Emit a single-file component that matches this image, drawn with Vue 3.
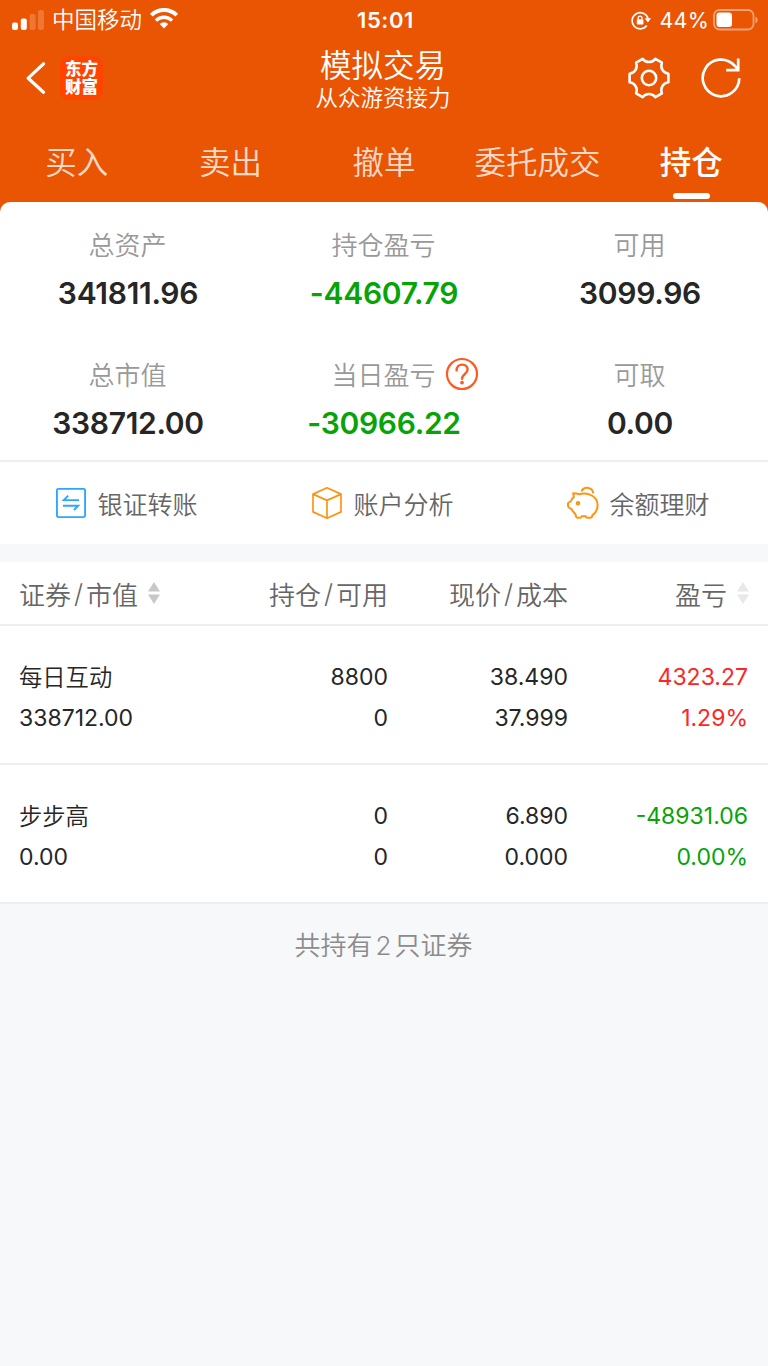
<template>
  <div class="page">
    <header class="header">
      <!-- Status bar -->
      <div class="status">
        <div class="status-left">
          <svg class="signal" width="32" height="20" viewBox="0 0 32 20" fill="#fff">
            <rect x="0" y="12.5" width="6" height="7.5" rx="2" />
            <rect x="8.8" y="8.5" width="6" height="11.5" rx="2" />
            <rect x="17.6" y="4" width="6" height="16" rx="2" opacity="0.2" />
            <rect x="26" y="0" width="6" height="20" rx="2" opacity="0.2" />
          </svg>
          <span class="carrier">中国移动</span>
          <svg class="wifi" width="28" height="21" viewBox="0 0 28 21" fill="none" stroke="#fff" stroke-width="4">
            <path d="M1.3 7.2a18 18 0 0 1 25.4 0" />
            <path d="M5.9 12.6a11.5 11.5 0 0 1 16.2 0" stroke-width="3.4" />
            <path d="M14 20.5l-4.3-4.4a6.2 6.2 0 0 1 8.6 0z" fill="#fff" stroke="none" />
          </svg>
        </div>
        <span class="clock">15:01</span>
        <div class="status-right">
          <svg width="20" height="19" viewBox="0 0 20 19" fill="none" stroke="#fff" stroke-width="1.7">
            <path d="M17 7.4a8.1 8.1 0 1 0-1.2 7.2" />
            <path d="M13.6 7.2H20l-3.100 4.300z" fill="#fff" stroke="none" />
            <rect x="5.8" y="8.2" width="6.6" height="5.4" rx="0.8" fill="#fff" stroke="none" />
            <path d="M7.2 8.6V7a1.9 1.9 0 0 1 3.8 0v1.6" stroke-width="1.3" />
          </svg>
          <span class="percent">44%</span>
          <svg width="46" height="22" viewBox="0 0 46 22">
            <rect x="1" y="1" width="39.5" height="19.5" rx="5.5" fill="none" stroke="#fff" stroke-width="1.8" opacity="0.45" />
            <rect x="3.5" y="3.5" width="15.5" height="14.5" rx="3" fill="#fff" />
            <path d="M42.5 7.5a4 4 0 0 1 0 7z" fill="#fff" opacity="0.5" />
          </svg>
        </div>
      </div>

      <!-- Title bar -->
      <div class="nav">
        <div class="nav-left">
          <svg width="20" height="34" viewBox="0 0 20 34" fill="none" stroke="#fff" stroke-width="3.2" stroke-linecap="round" stroke-linejoin="round">
            <path d="M17.5 2.8L2.2 17.2l15.3 14" />
          </svg>
          <div class="logo"><span>东方</span><span>财富</span></div>
        </div>
        <div class="nav-title">
          <h1>模拟交易</h1>
          <p>从众游资接力</p>
        </div>
        <div class="nav-right">
          <svg width="42" height="42" viewBox="0 0 42 42" fill="none" stroke="#fff" stroke-width="2.6" stroke-linejoin="round">
            <path d="M14.6 1.9C16.2 4 18.3 5 21 5s4.8-1 6.4-3.1l6.5 3.7c-1 2.6-.8 4.9.5 7.2 1.300 2.200 3.300 3.500 6 3.900v8.600c-2.700.4-4.700 1.700-6 3.900-1.300 2.300-1.500 4.600-.5 7.200l-6.500 3.700C25.800 38 23.700 37 21 37s-4.800 1-6.400 3.100l-6.500-3.700c1-2.600.8-4.900-.5-7.200-1.300-2.200-3.300-3.500-6-3.900v-8.600c2.700-.4 4.700-1.700 6-3.900 1.300-2.300 1.500-4.600.5-7.200z" />
            <circle cx="21" cy="21" r="7.2" />
          </svg>
          <svg width="42" height="42" viewBox="0 0 42 42" fill="none" stroke="#fff" stroke-width="2.7">
            <path d="M39.3 21.3A18.300 18.300 0 1 1 34.6 8.7l3.400 3.700" />
            <path d="M38.2 1.6v11.600H26.2" />
          </svg>
        </div>
      </div>

      <nav class="tabs">
        <span v-for="tab in tabs" :key="tab" class="tab" :class="{ active: tab === current }">{{ tab }}</span>
      </nav>
    </header>

    <!-- Account summary -->
    <div class="summary-wrap">
      <section class="summary">
        <div v-for="s in stats" :key="s.label" class="stat">
          <div class="stat-label">
            {{ s.label }}
            <svg v-if="s.help" class="help" width="34" height="34" viewBox="0 0 34 34" fill="none" stroke="#ff5a1f" stroke-width="2.2">
              <circle cx="17" cy="17" r="15" />
              <path d="M11.6 13.4c0-3.800 2.400-5.800 5.500-5.800 3.200 0 5.500 2 5.500 5 0 4.300-5.600 4.600-5.600 9.200" stroke-width="2.4" stroke-linecap="round" />
              <circle cx="17" cy="25.6" r="1.9" fill="#ff5a1f" stroke="none" />
            </svg>
          </div>
          <div class="stat-value" :class="s.tone">{{ s.value }}</div>
        </div>
      </section>
    </div>

    <section class="actions">
      <div class="action">
        <svg width="32" height="34" viewBox="0 0 32 34" fill="none" stroke="#2ea5ff" stroke-width="1.9">
          <rect x="1.9" y="2.9" width="28.2" height="28.2" rx="1.5" />
          <path d="M24 14.100H8.800l4.400-4.400M8 19.700h15.200l-4.200 4.300" />
        </svg>
        <span>银证转账</span>
      </div>
      <div class="action">
        <svg width="32" height="34" viewBox="0 0 32 34" fill="none" stroke="#ff9412" stroke-width="1.7" stroke-linejoin="round">
          <path d="M16 1.8l14 6.300v17.800l-14 6.300-14-6.300V8.100zM2 8.100l14 6.300 14-6.300M16 14.400v17.800" />
        </svg>
        <span>账户分析</span>
      </div>
      <div class="action">
        <svg width="32" height="34" viewBox="0 0 32 34" fill="none" stroke="#ff9412" stroke-width="2" stroke-linecap="round" stroke-linejoin="round">
          <path d="M6.200 7.300c2.600.2 4.300.5 6 .9 3.300-.8 7.500-.8 10.600.4 4.800 1.800 7.800 5.500 7.800 10.300 0 4.600-2.300 8.300-5.300 10.500-.2 1.600-.8 2.400-2 2.400h-2.800c-1 0-1.500-.6-1.700-1.600-1.400.2-2.800.2-4.100 0-.3 1-.8 1.600-1.800 1.600h-1.900c-1.400 0-2-.7-2.100-2.100-.1-2.300-2.400-3.200-3.700-5.500-.4-.8-.8-1.100-1.500-1.500L1.900 21.500c-.6-.5-.9-1.200-.9-2v-1.800c0-.8.4-1.300 1.200-1.600l1.600-.7c.4-1.900 1.500-3.200 3-4.300z" />
          <path d="M14.800 4.600c3-4.400 10.600-3.500 11.300 2" />
          <circle cx="11" cy="17.300" r="1.300" fill="#ff9412" />
        </svg>
        <span>余额理财</span>
      </div>
    </section>

    <!-- Holdings -->
    <section class="holdings">
      <div class="row head">
        <div class="cell-head">证券<i>/</i>市值
          <svg class="sort" width="12" height="22" viewBox="0 0 12 22" fill="#c8c8c8"><path d="M6 0l6 9.5H0zM6 22l6-9.500H0z" /></svg>
        </div>
        <div class="cell-head">持仓<i>/</i>可用</div>
        <div class="cell-head">现价<i>/</i>成本</div>
        <div class="cell-head">盈亏
          <svg class="sort" width="12" height="22" viewBox="0 0 12 22" fill="#e8e8e8"><path d="M6 0l6 9.500H0zM6 22l6-9.500H0z" /></svg>
        </div>
      </div>
      <div v-for="h in holdings" :key="h.name" class="row item">
        <div><p class="name">{{ h.name }}</p><p>{{ h.marketValue }}</p></div>
        <div><p>{{ h.amount }}</p><p>{{ h.available }}</p></div>
        <div><p>{{ h.price }}</p><p>{{ h.cost }}</p></div>
        <div :class="h.tone"><p>{{ h.profit }}</p><p>{{ h.rate }}</p></div>
      </div>
    </section>

    <p class="total">共持有<b>{{ holdings.length }}</b>只证券</p>
  </div>
</template>

<script setup>
import { ref } from 'vue'

const tabs = ['买入', '卖出', '撤单', '委托成交', '持仓']
const current = ref('持仓')

const stats = [
  { label: '总资产', value: '341811.96' },
  { label: '持仓盈亏', value: '-44607.79', tone: 'down' },
  { label: '可用', value: '3099.96' },
  { label: '总市值', value: '338712.00' },
  { label: '当日盈亏', value: '-30966.22', tone: 'down', help: true },
  { label: '可取', value: '0.00' },
]

const holdings = [
  {
    name: '每日互动', marketValue: '338712.00', amount: '8800', available: '0',
    price: '38.490', cost: '37.999', profit: '4323.27', rate: '1.29%', tone: 'up',
  },
  {
    name: '步步高', marketValue: '0.00', amount: '0', available: '0',
    price: '6.890', cost: '0.000', profit: '-48931.06', rate: '0.00%', tone: 'down',
  },
]
</script>

<style>
body { background: #f7f8fa; }
</style>

<style scoped>
.page {
  --c-brand: #ea5504;
  --c-line: #eeeeee;
  --c-ink: #262626;
  --w-text: 350;

  min-height: 1366px;
  background: #f7f8fa;
  color: var(--c-ink);
  font-family: Inter, 'Noto Sans CJK SC', sans-serif;
  font-weight: var(--w-text);
}

p, h1 { margin: 0; }
svg { display: block; flex: none; }

/* ── HEADER ── */
.header {
  height: 202px;
  background: var(--c-brand);
  color: #fff;
}

.status {
  display: grid;
  grid-template-columns: 1fr auto 1fr;
  align-items: center;
  height: 40px;
  padding: 0 9px 0 12px;
}

.status-left, .status-right { display: flex; align-items: center; }
.status-right { justify-content: flex-end; }
.carrier { margin-left: 8px; font-size: 22.5px; line-height: 40px; }
.wifi { margin: 0 0 3px 8px; }
.clock { font-size: 22px; font-weight: 600; letter-spacing: 0.6px; }
.percent { margin: 0 4px 0 9px; font-size: 21.5px; font-weight: 400; letter-spacing: 0.2px; }

.nav {
  display: grid;
  grid-template-columns: 1fr auto 1fr;
  height: 80px;
  padding: 0 26px;
}

.nav-left { display: flex; align-items: center; gap: 14px; padding-bottom: 4px; }

.logo {
  display: flex;
  flex-direction: column;
  align-items: center;
  justify-content: center;
  width: 43px;
  height: 44px;
  border-radius: 9px;
  background: #ff4400;
  font-size: 16.5px;
  font-weight: 900;
  line-height: 18px;
}

.nav-title { margin-left: -2px; text-align: center; }
.nav-title h1 { padding-top: 8px; font-size: 31.5px; font-weight: var(--w-text); line-height: 36px; }
.nav-title p { font-size: 22.5px; line-height: 27px; }
.nav-right { display: flex; align-items: center; justify-content: flex-end; gap: 30px; padding-bottom: 4px; }

.tabs { display: grid; grid-template-columns: repeat(5, 1fr); }

.tab {
  display: flex;
  flex-direction: column;
  align-items: center;
  height: 82px;
  font-size: 31.5px;
  line-height: 85px;
  color: rgba(255, 255, 255, 0.8);
}

.tab.active { color: #fff; font-weight: 500; }

.tab.active::after {
  content: '';
  width: 37px;
  height: 6px;
  margin-top: -12px;
  border-radius: 3px;
  background: #fff;
}

/* ── SUMMARY ── */
.summary-wrap { background: var(--c-brand); }

.summary {
  display: grid;
  grid-template-columns: repeat(3, 1fr);
  row-gap: 32px;
  padding: 18px 0 12px;
  border-bottom: 2px solid var(--c-line);
  border-radius: 10px 10px 0 0;
  background: #fff;
  text-align: center;
}

.stat-label {
  display: flex;
  align-items: center;
  justify-content: center;
  height: 46px;
  margin: 0 1px 2px 0;
  font-size: 26px;
  color: #999;
}

.help { margin: 2px -43px 0 9px; }
.stat-value { font-size: 30px; font-weight: 600; line-height: 50px; letter-spacing: -0.3px; }
.up { color: #ff2525; }
.down { color: #07a307; }

/* ── ACTIONS ── */
.actions {
  display: grid;
  grid-template-columns: repeat(3, 1fr);
  height: 82px;
  background: #fff;
}

.action {
  display: flex;
  align-items: center;
  justify-content: center;
  gap: 10px;
  padding-right: 3px;
  font-size: 25px;
  color: #666;
}

/* ── HOLDINGS ── */
.holdings { margin-top: 18px; background: #fff; }

.row {
  display: grid;
  grid-template-columns: 188px 181px 180px 180px;
  padding: 0 20px 0 19px;
  border-bottom: 2px solid var(--c-line);
  text-align: right;
}

.row > :first-child { text-align: left; justify-content: flex-start; }

.head { height: 62px; }

.cell-head {
  display: flex;
  align-items: center;
  justify-content: flex-end;
  font-size: 26px;
  color: #666;
}

.cell-head i { margin: 0 3px; font-style: normal; }
.cell-head:last-child { margin-right: -1px; }
.sort { margin-left: 10px; }

.item {
  height: 106px;
  padding-top: 31px;
  font-size: 23px;
  font-weight: 400;
  line-height: 41px;
}

.name { font-size: 23.3px; font-weight: var(--w-text); }

.total {
  padding: 21px 1px 0 0;
  font-size: 26px;
  line-height: 42px;
  text-align: center;
  color: #8c8c8c;
}

.total b { margin: 0 3px; font-weight: var(--w-text); }
</style>
